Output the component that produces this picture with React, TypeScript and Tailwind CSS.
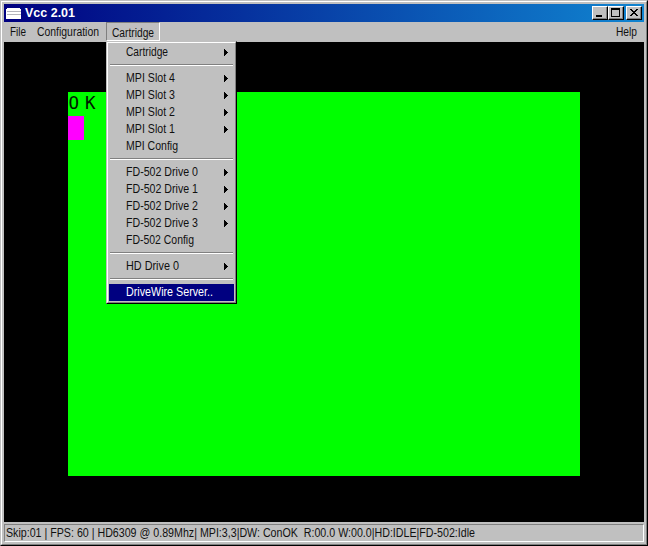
import type { ReactNode } from "react";

type Item = { label?: string; sub?: boolean; active?: boolean; width?: number };

const items: Item[] = [
  { label: "Cartridge", sub: true, width: 42 },
  {},
  { label: "MPI Slot 4", sub: true, width: 49 },
  { label: "MPI Slot 3", sub: true, width: 49 },
  { label: "MPI Slot 2", sub: true, width: 49 },
  { label: "MPI Slot 1", sub: true, width: 49 },
  { label: "MPI Config", width: 52 },
  {},
  { label: "FD-502 Drive 0", sub: true, width: 72 },
  { label: "FD-502 Drive 1", sub: true, width: 72 },
  { label: "FD-502 Drive 2", sub: true, width: 72 },
  { label: "FD-502 Drive 3", sub: true, width: 72 },
  { label: "FD-502 Config", width: 68 },
  {},
  { label: "HD Drive 0", sub: true, width: 53 },
  {},
  { label: "DriveWire Server..", active: true, width: 87 },
];

/* One line of text condensed or stretched to a fixed advance width. */
function Fit({ w, size = 12, bold, color = "#101010", children }: { w: number; size?: number; bold?: boolean; color?: string; children: string }) {
  return (
    <svg width={w} height="17" className="block shrink-0 overflow-visible">
      <text
        x="0"
        y="12"
        textLength={w}
        lengthAdjust="spacingAndGlyphs"
        fontSize={size}
        fontWeight={bold ? 700 : 400}
        fill={color}
        xmlSpace="preserve"
      >
        {children}
      </text>
    </svg>
  );
}

function CaptionButton({ children, className = "" }: { children: ReactNode; className?: string }) {
  return (
    <div className={`h-[14px] w-4 border border-t-white border-l-white border-r-black border-b-black bg-[#c0c0c0] ${className}`}>
      <svg width="14" height="12" viewBox="0 0 14 12" shapeRendering="crispEdges" className="block">
        <path d="M13.5 0V11.5H0" fill="none" stroke="#808080" />
        {children}
      </svg>
    </div>
  );
}

function Menu() {
  return (
    <div className="absolute top-[19px] left-[102px] z-10 w-[131px] border border-t-[#c0c0c0] border-l-[#c0c0c0] border-r-black border-b-black bg-[#c0c0c0]">
      <div className="border border-t-white border-l-white border-r-[#808080] border-b-[#808080] p-px">
        {items.map((item, i) =>
          item.label ? (
            <div key={i} className={`flex h-[17px] items-center pl-[17px] ${item.active ? "bg-[#000080]" : ""}`}>
              <Fit w={item.width ?? 50} color={item.active ? "#ffffff" : "#101010"}>{item.label}</Fit>
              {item.sub && (
                <svg width="4" height="7" viewBox="0 0 4 7" shapeRendering="crispEdges" className="mr-[6px] ml-auto">
                  <path d="M0 0h1v1h1v1h1v1h1v1h-1v1h-1v1h-1v1h-1z" fill="#000" />
                </svg>
              )}
            </div>
          ) : (
            <div key={i} className="flex h-[9px] flex-col px-px pt-[3px]">
              <div className="h-px bg-[#808080]" />
              <div className="h-px bg-white" />
            </div>
          ),
        )}
      </div>
    </div>
  );
}

export default function App() {
  return (
    <div className="h-[546px] w-[648px] overflow-hidden border border-t-[#c0c0c0] border-l-[#c0c0c0] border-r-black border-b-black bg-[#c0c0c0] font-['Liberation_Sans',Arial,sans-serif]">
      <div className="h-[544px] border border-t-white border-l-white border-r-[#808080] border-b-[#808080] p-[2px]">
        <div className="flex h-[18px] items-center bg-[linear-gradient(to_right,#000080,#1084d0)] pr-[2px] pl-[2px]">
          <svg width="15" height="11" viewBox="0 0 15 11" shapeRendering="crispEdges" className="mt-px mr-[4px]">
            <path d="M1 0h13v1h1v10H0V1h1z" fill="#fff" />
            <path d="M1 3.5h14M1 6.5h14" stroke="#b4b4bc" />
          </svg>
          <div className="mt-px">
            <Fit w={50} size={12.5} bold color="#ffffff">Vcc 2.01</Fit>
          </div>
          <div className="ml-auto flex">
            <CaptionButton><path d="M3 8h6v2H3z" /></CaptionButton>
            <CaptionButton><path d="M2 1h9v9H2zM3 3v6h7V3z" fillRule="evenodd" /></CaptionButton>
            <CaptionButton className="ml-[2px]">
              <path d="M3 2h2v1h1v1h2V3h1V2h2v1h-1v1H9v1H8v1h1v1h1v1h1v1H9V8H8V7H6v1H5v1H3V8h1V7h1V6h1V5H5V4H4V3H3z" />
            </CaptionButton>
          </div>
        </div>

        <div className="relative flex h-5 items-start">
          <div className="mt-[2px] ml-[6px]"><Fit w={16}>File</Fit></div>
          <div className="mt-[2px] ml-[11px]"><Fit w={62}>Configuration</Fit></div>
          <div className="ml-[7px] h-[19px] w-[54px] border border-t-[#808080] border-l-[#808080] border-r-white border-b-white pt-[2px] pl-[5px]">
            <Fit w={42}>Cartridge</Fit>
          </div>
          <div className="mt-[2px] mr-[7px] ml-auto"><Fit w={21}>Help</Fit></div>
          <Menu />
        </div>

        <div className="h-[480px] bg-black pt-[50px] pl-16">
          <div className="h-[384px] w-[512px] bg-[#00ff00]">
            <div className="flex h-6 items-start font-['DejaVu_Sans_Mono',monospace]">
              <svg width="40" height="22" className="block">
                <text x="0.5 17" y="17" fontSize="17.5" fill="#001800">OK</text>
              </svg>
            </div>
            <div className="h-6 w-4 bg-[#ff00ff]" />
          </div>
        </div>

        <div className="h-5 pt-[2px]">
          <div className="flex h-[18px] items-start border border-t-[#808080] border-l-[#808080] border-r-white border-b-white pl-px">
            <Fit w={469}>{"Skip:01 | FPS: 60 | HD6309 @ 0.89Mhz| MPI:3,3|DW: ConOK  R:00.0 W:00.0|HD:IDLE|FD-502:Idle"}</Fit>
          </div>
        </div>
      </div>
    </div>
  );
}
